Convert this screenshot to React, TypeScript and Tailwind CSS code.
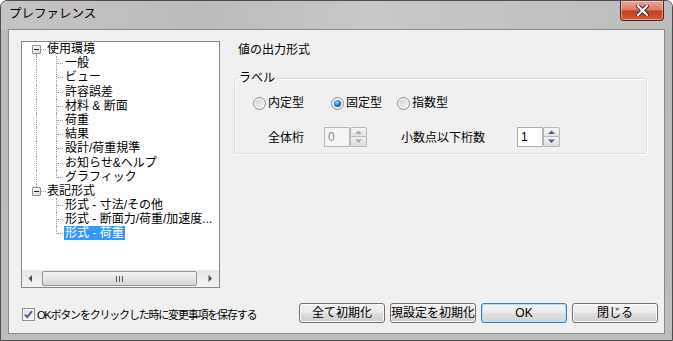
import type { ReactNode } from 'react'

type TreeNode = {
  label: string
  kind: 'root' | 'child'
  first?: boolean
  lastRoot?: boolean
  lastChild?: boolean
  underLast?: boolean
  selected?: boolean
}

const tree: TreeNode[] = [
  { label: '使用環境', kind: 'root', first: true },
  { label: '一般', kind: 'child' },
  { label: 'ビュー', kind: 'child' },
  { label: '許容誤差', kind: 'child' },
  { label: '材料 & 断面', kind: 'child' },
  { label: '荷重', kind: 'child' },
  { label: '結果', kind: 'child' },
  { label: '設計/荷重規準', kind: 'child' },
  { label: 'お知らせ&ヘルプ', kind: 'child' },
  { label: 'グラフィック', kind: 'child', lastChild: true },
  { label: '表記形式', kind: 'root', lastRoot: true },
  { label: '形式 - 寸法/その他', kind: 'child', underLast: true },
  { label: '形式 - 断面力/荷重/加速度...', kind: 'child', underLast: true },
  { label: '形式 - 荷重', kind: 'child', underLast: true, lastChild: true, selected: true },
]

// ツリーの展開ボックス
function ExpandBox() {
  return (
    <div className="absolute left-[10px] top-[3px] w-[9px] h-[9px] border border-[#919191] rounded-[1px] bg-[linear-gradient(135deg,#ffffff,#d9d9d9)] flex items-center justify-center">
      <div className="w-[5px] h-px bg-[#1e1e1e]" />
    </div>
  )
}

function TreeRow({ node }: { node: TreeNode }) {
  if (node.kind === 'root') {
    return (
      <div className="relative h-[14.2px] leading-[14px] pl-[25px] whitespace-nowrap">
        {!node.first && <div className="absolute left-[14px] top-0 h-[3px] border-l border-dotted border-[#a0a0a0]" />}
        {!node.lastRoot && <div className="absolute left-[14px] top-[12px] bottom-0 border-l border-dotted border-[#a0a0a0]" />}
        <div className="absolute left-[19px] top-[7px] w-[5px] border-t border-dotted border-[#a0a0a0]" />
        <ExpandBox />
        <span>{node.label}</span>
      </div>
    )
  }
  return (
    <div className="relative h-[14.2px] leading-[14px] pl-[42px] whitespace-nowrap">
      {!node.underLast && <div className="absolute left-[14px] top-0 bottom-0 border-l border-dotted border-[#a0a0a0]" />}
      {node.lastChild ? (
        <div className="absolute left-[34px] top-0 h-[8px] border-l border-dotted border-[#a0a0a0]" />
      ) : (
        <div className="absolute left-[34px] top-0 bottom-0 border-l border-dotted border-[#a0a0a0]" />
      )}
      <div className="absolute left-[35px] top-[7px] w-[6px] border-t border-dotted border-[#a0a0a0]" />
      <span className={node.selected ? 'px-px bg-[#3399ff] text-white' : 'px-px'}>{node.label}</span>
    </div>
  )
}

function Arrow({ dir, color }: { dir: 'up' | 'down' | 'left' | 'right'; color: string }) {
  const d =
    dir === 'up' ? 'M0 4 L3.5 0.5 L7 4 Z'
    : dir === 'down' ? 'M0 0.5 L3.5 4 L7 0.5 Z'
    : dir === 'left' ? 'M4 0 L0.5 3.5 L4 7 Z'
    : 'M0.5 0 L4 3.5 L0.5 7 Z'
  const w = dir === 'up' || dir === 'down' ? 7 : 5
  const h = dir === 'up' || dir === 'down' ? 5 : 7
  return (
    <svg width={w} height={h} viewBox={`0 0 ${w} ${h}`}>
      <path d={d} fill={color} />
    </svg>
  )
}

function HScrollbar() {
  return (
    <div className="h-[17px] flex bg-[linear-gradient(180deg,#e6e6e6,#f3f3f3)]">
      <div className="w-[17px] flex items-center justify-center">
        <Arrow dir="left" color="#4d4d4d" />
      </div>
      <div className="ml-[3px] mt-[1px] w-[155px] h-[15px] rounded-[2px] border border-[#979797] bg-[linear-gradient(180deg,#f4f4f4,#e6e6e6_50%,#d4d4d4)] flex items-center justify-center gap-[2px]">
        <div className="w-px h-[6px] bg-[#5a5a5a]" />
        <div className="w-px h-[6px] bg-[#5a5a5a]" />
        <div className="w-px h-[6px] bg-[#5a5a5a]" />
      </div>
      <div className="flex-1" />
      <div className="w-[17px] flex items-center justify-center">
        <Arrow dir="right" color="#4d4d4d" />
      </div>
    </div>
  )
}

function Radio({ checked }: { checked?: boolean }) {
  return (
    <svg width="13" height="13" viewBox="0 0 13 13">
      <defs>
        <linearGradient id="rOff" x1="0" y1="0" x2="1" y2="1">
          <stop offset="0" stopColor="#cfcfcf" />
          <stop offset="1" stopColor="#f7f7f7" />
        </linearGradient>
        <radialGradient id="rOn" cx="0.4" cy="0.35" r="0.7">
          <stop offset="0" stopColor="#9cd7ff" />
          <stop offset="0.55" stopColor="#2f86d6" />
          <stop offset="1" stopColor="#17437a" />
        </radialGradient>
      </defs>
      <circle cx="6.5" cy="6.5" r="6" fill="#f1f1f1" stroke="#8e8f8f" />
      {checked ? <circle cx="6.5" cy="6.5" r="3.6" fill="url(#rOn)" /> : <circle cx="6.5" cy="6.5" r="4" fill="url(#rOff)" />}
    </svg>
  )
}

function Spin({ value, disabled }: { value: string; disabled?: boolean }) {
  const arrow = disabled ? '#a8a8a8' : '#4a5f85'
  return (
    <div className="flex h-[20px]">
      <div
        className={
          disabled
            ? 'w-[26px] h-[20px] border border-[#b5b8bb] bg-[#f4f4f4] text-[#8c8c8c] pl-[3px] leading-[18px]'
            : 'w-[26px] h-[20px] border border-[#abadb3] bg-white text-black pl-[3px] leading-[18px]'
        }
      >
        {value}
      </div>
      <div className="w-[17px] flex flex-col">
        <div className="h-[10px] border border-[#b7b7b7] rounded-t-[2px] bg-[linear-gradient(180deg,#f6f6f6,#e2e2e2)] flex items-center justify-center">
          <Arrow dir="up" color={arrow} />
        </div>
        <div className="h-[10px] border border-t-0 border-[#b7b7b7] rounded-b-[2px] bg-[linear-gradient(180deg,#f2f2f2,#dcdcdc)] flex items-center justify-center">
          <Arrow dir="down" color={arrow} />
        </div>
      </div>
    </div>
  )
}

function Checkbox() {
  return (
    <svg width="13" height="13" viewBox="0 0 13 13" className="shrink-0">
      <defs>
        <linearGradient id="cb" x1="0" y1="0" x2="1" y2="1">
          <stop offset="0" stopColor="#dcdcdc" />
          <stop offset="1" stopColor="#fbfbfb" />
        </linearGradient>
      </defs>
      <rect x="0.5" y="0.5" width="12" height="12" fill="#f6f6f6" stroke="#8e8f8f" />
      <rect x="2" y="2" width="9" height="9" fill="url(#cb)" />
      <path d="M3 6.5 L5.3 9 L10 3.2" fill="none" stroke="#3f4fa0" strokeWidth="1.8" />
    </svg>
  )
}

function Button({ children, primary }: { children: ReactNode; primary?: boolean }) {
  return (
    <div
      className={
        primary
          ? 'w-[86px] h-[20px] rounded-[3px] border border-[#3c7fb1] bg-[linear-gradient(180deg,#f4f4f4_0%,#ececec_48%,#dfdfdf_52%,#d3d3d3_100%)] shadow-[inset_0_0_0_1px_#aee3fa] flex items-center justify-center leading-[18px] whitespace-nowrap'
          : 'w-[86px] h-[20px] rounded-[3px] border border-[#707070] bg-[linear-gradient(180deg,#f2f2f2_0%,#ebebeb_48%,#dddddd_52%,#cfcfcf_100%)] shadow-[inset_0_0_0_1px_#fbfbfb] flex items-center justify-center leading-[18px] whitespace-nowrap'
      }
    >
      {children}
    </div>
  )
}

function CloseButton() {
  return (
    <div className="w-[44px] h-[20px] rounded-b-[4px] border border-t-0 border-[#5a2118] bg-[linear-gradient(180deg,#e9a99b_0%,#d97b66_45%,#c2401f_55%,#d45a3c_100%)] shadow-[inset_0_0_0_1px_rgba(255,220,210,0.5)] flex items-center justify-center">
      <svg width="13" height="11" viewBox="0 0 13 11">
        <path d="M2 1 L11 10 M11 1 L2 10" stroke="#3a1a14" strokeWidth="4" strokeLinecap="square" />
        <path d="M2 1 L11 10 M11 1 L2 10" stroke="#ffffff" strokeWidth="2.2" strokeLinecap="square" />
      </svg>
    </div>
  )
}

export default function App() {
  return (
    <div className="w-[673px] h-[341px] flex flex-col rounded-t-[7px] border border-[#4e4e4e] bg-[linear-gradient(180deg,#c3c3c3,#b9b9b9_10%,#bdbdbd)] text-[12px] text-black font-['Liberation_Sans','Noto_Sans_CJK_JP',sans-serif] overflow-hidden">
      {/* タイトルバー */}
      <div className="h-[28px] flex items-start justify-between pl-[8px] pr-[8px] bg-[linear-gradient(90deg,#c6c4c4,#bdbaba_30%,#c9c7c7_55%,#c2c2c2_80%,#bcbcbc)]">
        <div className="text-[12.5px] leading-[27px]">プレファレンス</div>
        <CloseButton />
      </div>

      {/* クライアント領域 */}
      <div className="mx-[7px] h-[305px] border border-[#8a8a8a] bg-[#f0f0f0] flex flex-col pl-[12px] pr-[6px] pt-[11px]">
        <div className="flex h-[247px]">
          {/* ツリー */}
          <div className="w-[199px] h-[247px] border border-[#828790] bg-white flex flex-col">
            <div className="flex-1 overflow-hidden">
              {tree.map((n) => (
                <TreeRow key={n.label} node={n} />
              ))}
            </div>
            <HScrollbar />
          </div>

          {/* 右パネル */}
          <div className="ml-[14px] w-[413px] flex flex-col">
            <div className="pl-[4px] h-[18px] leading-[18px]">値の出力形式</div>
            <fieldset className="mt-[11px] h-[84px] border border-[#d5dfe5] rounded-[3px] shadow-[inset_1px_1px_0_#ffffff,1px_1px_0_#ffffff]">
              <legend className="ml-[3px] px-px leading-[16px]">ラベル</legend>
              <div className="mt-[10px] h-[14px] flex items-center pl-[18px]">
                <div className="w-[78px] flex items-center gap-[2px]">
                  <Radio />
                  <span className="leading-[14px]">内定型</span>
                </div>
                <div className="w-[66px] flex items-center gap-[2px]">
                  <Radio checked />
                  <span className="leading-[14px]">固定型</span>
                </div>
                <div className="flex items-center gap-[2px]">
                  <Radio />
                  <span className="leading-[14px]">指数型</span>
                </div>
              </div>
              <div className="mt-[17px] h-[20px] flex items-center pl-[33px]">
                <div className="w-[56px] leading-[14px] pt-[2px]">全体桁</div>
                <Spin value="0" disabled />
                <div className="ml-[34px] w-[116px] leading-[14px] pt-[2px]">小数点以下桁数</div>
                <Spin value="1" />
              </div>
            </fieldset>
          </div>
        </div>

        {/* 下部 */}
        <div className="mt-[15px] h-[20px] flex items-center justify-between">
          <div className="flex items-center gap-[2px] ml-px mt-[3px] whitespace-nowrap">
            <Checkbox />
            <span className="leading-[14px] text-[11px] tracking-[-1.2px]">OKボタンをクリックした時に変更事項を保存する</span>
          </div>
          <div className="flex gap-[5px]">
            <Button>全て初期化</Button>
            <Button>現設定を初期化</Button>
            <Button primary>OK</Button>
            <Button>閉じる</Button>
          </div>
        </div>
      </div>
    </div>
  )
}
